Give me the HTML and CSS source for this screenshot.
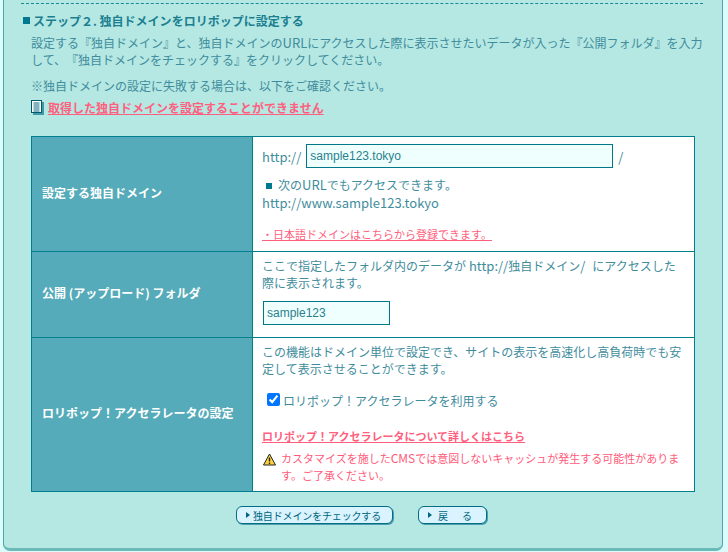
FILE: index.html
```html
<!DOCTYPE html>
<html lang="ja">
<head>
<meta charset="utf-8">
<title>独自ドメイン設定</title>
<link rel="stylesheet" href="styles.css">
</head>
<body>
<main class="panel">
  <div class="dots"></div>
  <h2 class="step"><span class="sq"></span>ステップ２. 独自ドメインをロリポップに設定する</h2>
  <div class="intro">
    <p class="lead">設定する『独自ドメイン』と、独自ドメインの<span class="lat">URL</span>にアクセスした際に表示させたいデータが入った『公開フォルダ』を入力して、『独自ドメインをチェックする』をクリックしてください。</p>
    <p class="note">※独自ドメインの設定に失敗する場合は、以下をご確認ください。</p>
    <p class="help">
      <svg class="doc" width="13" height="15" viewBox="0 0 13 15"><rect x="2" y="2" width="11" height="13" fill="#3f9aa8"/><rect x="0.5" y="0.5" width="10" height="12" fill="#fff" stroke="#00586c"/><path d="M2.5 3h6M2.5 5h6M2.5 7h6M2.5 9h6M2.5 11h6" stroke="#00687c" fill="none"/></svg>
      <a class="link bold" href="#">取得した独自ドメインを設定することができません</a>
    </p>
  </div>
  <table class="form">
    <tr class="r1">
      <th>設定する独自ドメイン</th>
      <td>
        <div class="urlrow"><span class="lat">http://</span><input class="in wide" type="text" value="sample123.tokyo"><span class="slash">/</span></div>
        <p class="also"><span class="sq2"></span>次の<span class="lat">URL</span>でもアクセスできます。</p>
        <p class="www lat">http://www.sample123.tokyo</p>
        <p class="jp"><a class="link" href="#">・日本語ドメインはこちらから登録できます。</a></p>
      </td>
    </tr>
    <tr class="r2">
      <th>公開 (アップロード) フォルダ</th>
      <td>
        <p class="desc">ここで指定したフォルダ内のデータが<span class="lat"> http://</span>独自ドメイン<span class="lat sp">/ </span>にアクセスした際に表示されます。</p>
        <input class="in narrow" type="text" value="sample123">
      </td>
    </tr>
    <tr class="r3">
      <th>ロリポップ！アクセラレータの設定</th>
      <td>
        <p class="desc">この機能はドメイン単位で設定でき、サイトの表示を高速化し高負荷時でも安定して表示させることができます。</p>
        <label class="check"><input type="checkbox" checked>ロリポップ！アクセラレータを利用する</label>
        <p class="more"><a class="link bold" href="#">ロリポップ！アクセラレータについて詳しくはこちら</a></p>
        <div class="warn">
          <svg class="tri" width="13" height="13" viewBox="0 0 13 13"><path d="M6.5 1 L12.5 12 H0.5 Z" fill="#ffd23c" stroke="#222" stroke-linejoin="round"/><path d="M6.5 4.5V8.5M6.5 9.5V11" stroke="#222" stroke-width="1.4"/></svg>
          <p>カスタマイズを施した<span class="cms">CMS</span>では意図しないキャッシュが発生する可能性があります。ご了承ください。</p>
        </div>
      </td>
    </tr>
  </table>
  <div class="btns">
    <button class="btn b1" type="button"><i></i>独自ドメインをチェックする</button>
    <button class="btn b2" type="button"><i></i>戻　る</button>
  </div>
</main>
</body>
</html>
```
FILE: styles.css
```css
html, body { margin: 0; padding: 0; height: 552px; overflow: hidden; background: #dcfbfb; }
body { font-family: "Noto Sans CJK JP", "Noto Sans", sans-serif; font-size: 12px; color: #3f8d9c; line-height: 17px; text-spacing-trim: space-all; }
p { margin: 0; }
.lat { font-size: 13px; line-height: 1; }
.sp { margin-right: 4px; }
.cms { font-size: 12px; line-height: 1; }
.panel {
  box-sizing: border-box; width: 720px; height: 551px; margin-left: 3px;
  background: #b5e7e3; border: 1px solid #4aa8ac; border-top: 0; border-bottom: 3px solid #6cb9ba;
  border-radius: 0 0 7px 7px; padding-top: 3px; overflow: hidden;
}
.dots { margin: 0 19px 0 17px; border-top: 1px dashed #1c8796; height: 0; }
.step { margin: 8px 0 0 19px; font-size: 12px; line-height: 17px; font-weight: 700; color: #1b7f90; display: flex; align-items: center; }
.sq { width: 7px; height: 7px; background: #00788f; margin-right: 3px; flex: none; }
.intro { margin: 5px 16px 0 27px; }
.lead { height: 34px; }
.note { margin-top: 9px; }
.help { margin-top: 5px; display: flex; align-items: center; gap: 4px; height: 17px; }
.doc { flex: none; }
a.link { color: #ff5f7e; text-decoration: underline; }
a.bold { font-weight: 700; }
.form {
  border-collapse: collapse; table-layout: fixed; width: 664px; margin: 20px 0 0 27px;
}
.form th, .form td { border: 1px solid #00808f; padding: 0; vertical-align: top; }
.form th {
  width: 221px; background: #55abb9; color: #fff; font-size: 12px; font-weight: 700;
  text-align: left; vertical-align: middle; padding: 0 0 4px 10px; box-sizing: border-box;
}
.form td { background: #fff; padding: 0 10px 0 9px; }
.r1 { height: 115px; }
.r2 { height: 86px; }
.r3 { height: 154px; }
.urlrow { display: flex; align-items: center; gap: 5px; margin-top: 7px; height: 24px; }
.in {
  box-sizing: border-box; height: 24px; background: #eefffe; border: 1px solid #00788a; padding: 0 3px;
  font-family: "Liberation Sans", sans-serif; font-size: 12px; color: #2a7f8d; margin: 0; outline: 0;
}
.wide { width: 307px; }
.narrow { width: 127px; display: block; margin: 10px 0 0 1px; }
.slash { font-size: 13px; }
.also { margin-top: 8px; }
.sq2 { display: inline-block; width: 6px; height: 6px; background: #00788f; margin: 0 6px 1px 4px; }
.www { margin-top: 1px; line-height: 17px; }
.jp { margin-top: 15px; font-size: 11px; }
.r2 .desc { margin-top: 5px; }
.r3 .desc { margin-top: 5px; }
.check { display: flex; align-items: center; margin: 15px 0 0 5px; height: 17px; }
.check input { margin: -2px 3px 0 0; width: 13px; height: 13px; accent-color: #0075ff; }
.more { margin-top: 19px; font-size: 11px; }
.warn { display: flex; gap: 5px; margin-top: 5px; color: #ff5a7a; font-size: 11px; }
.tri { flex: none; margin: 3px 0 0 1px; }
.btns { display: flex; gap: 25px; margin: 14px 0 0 232px; }
.btn {
  box-sizing: border-box; height: 18px; padding: 0 0 0 16px; position: relative; text-align: left;
  background: #d9f3ff; border: 1px solid #006d84; border-radius: 6px; box-shadow: 1px 1px 0 #4d9fae;
  font-family: "Noto Sans CJK JP", sans-serif; font-size: 10px; line-height: 15px; color: #00667c;
}
.btn i { position: absolute; left: 9px; top: 5px; width: 0; height: 0; border-left: 4px solid #00667c; border-top: 3px solid transparent; border-bottom: 3px solid transparent; }
.b1 { width: 157px; letter-spacing: -0.15px; }
.b2 { width: 69px; letter-spacing: 2px; padding-left: 19px; }
```
